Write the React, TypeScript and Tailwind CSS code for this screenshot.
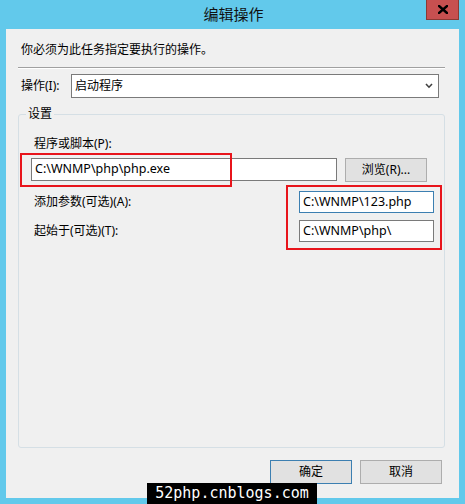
const cjk = { fontFamily: '"Noto Sans", "Noto Sans CJK SC", sans-serif' };

const Field = ({ value, width, focused }: { value: string; width: string; focused?: boolean }) => (
  <div
    className={`${width} h-full flex items-center bg-white border pl-[3px] text-[12.5px] text-black ${
      focused ? "border-[#3c7fb1]" : "border-[#7a7a7a]"
    }`}
  >
    {value}
  </div>
);

const Button = ({ label, primary }: { label: string; primary?: boolean }) => (
  <div
    className={`w-[82px] h-[24px] flex items-center justify-center bg-[#e1e1e1] border text-[12px] text-black ${
      primary ? "border-[#3c7fb1]" : "border-[#adadad]"
    }`}
  >
    {label}
  </div>
);

export default function App() {
  return (
    <div className="relative w-[465px] h-[504px] bg-[#62c9eb] flex flex-col overflow-hidden" style={cjk}>
      {/* title bar */}
      <div className="relative h-[29px] flex items-center justify-center text-[15px] text-[#111] pl-[2px]">
        编辑操作
        <div className="absolute top-0 right-[6px] w-[33px] h-[20px] bg-[#c75050] border-x border-b border-[#8a3a34] flex items-center justify-center">
          <svg width="10" height="9" viewBox="0 0 10 9">
            <path d="M1 1 L9 8 M9 1 L1 8" stroke="#000" strokeWidth="2.4" strokeLinecap="square" />
          </svg>
        </div>
      </div>

      {/* dialog body */}
      <div className="mx-[6px] h-[469px] bg-[#f0f0f0] flex flex-col text-[12px] text-black">
        <div className="pt-[13px] pl-[15px] leading-[16px]">你必须为此任务指定要执行的操作。</div>
        <div className="mt-[9px] ml-[12px] mr-[14px] border-t border-[#a0a0a0] border-b border-b-white" />

        <div className="mt-[5px] pl-[15px] h-[24px] flex items-center">
          <span className="w-[50px]">操作(I):</span>
          <div className="w-[368px] h-full bg-white border border-[#7a7a7a] flex items-center justify-between pl-[3px] pr-[5px]">
            <span>启动程序</span>
            <svg width="8" height="6" viewBox="0 0 8 6">
              <path d="M1 1 L4 4.2 L7 1" fill="none" stroke="#404040" strokeWidth="1.6" />
            </svg>
          </div>
        </div>

        {/* settings group */}
        <div className="relative mt-[16px] ml-[12px] mr-[14px] h-[334px] border border-[#d5dfe5] rounded-[3px]">
          <span className="absolute -top-[9px] left-[7px] px-[2px] bg-[#f0f0f0] leading-[16px]">设置</span>

          <div className="flex flex-col pl-[12px]">
            <div className="mt-[21px] pl-[3px] leading-[16px]">程序或脚本(P):</div>
            <div className="mt-[6px] h-[23px] flex items-center gap-[8px]">
              <Field value="C:\WNMP\php\php.exe" width="w-[306px]" />
              <Button label="浏览(R)..." />
            </div>

            <div className="mt-[10px] h-[22px] flex items-center justify-between pl-[3px] pr-[10px]">
              <span>添加参数(可选)(A):</span>
              <Field value="C:\WNMP\123.php" width="w-[135px]" focused />
            </div>
            <div className="mt-[7px] h-[22px] flex items-center justify-between pl-[3px] pr-[10px]">
              <span>起始于(可选)(T):</span>
              <Field value="C:\WNMP\php\" width="w-[135px]" />
            </div>
          </div>

          {/* red highlight marks */}
          <div className="absolute left-[1px] top-[38px] w-[212px] h-[34px] border-2 border-[#e8141b]" />
          <div className="absolute left-[267px] top-[70px] w-[156px] h-[65px] border-2 border-[#e8141b]" />
        </div>

        <div className="mt-[12px] pr-[17px] flex justify-end gap-[8px]">
          <Button label="确定" primary />
          <Button label="取消" />
        </div>
      </div>

      {/* watermark */}
      <div
        className="absolute left-[147px] top-[483px] w-[170px] h-[21px] bg-black text-white text-[15px] flex items-center justify-center"
        style={{ fontFamily: '"DejaVu Sans Mono", monospace' }}
      >
        52php.cnblogs.com
      </div>
    </div>
  );
}
